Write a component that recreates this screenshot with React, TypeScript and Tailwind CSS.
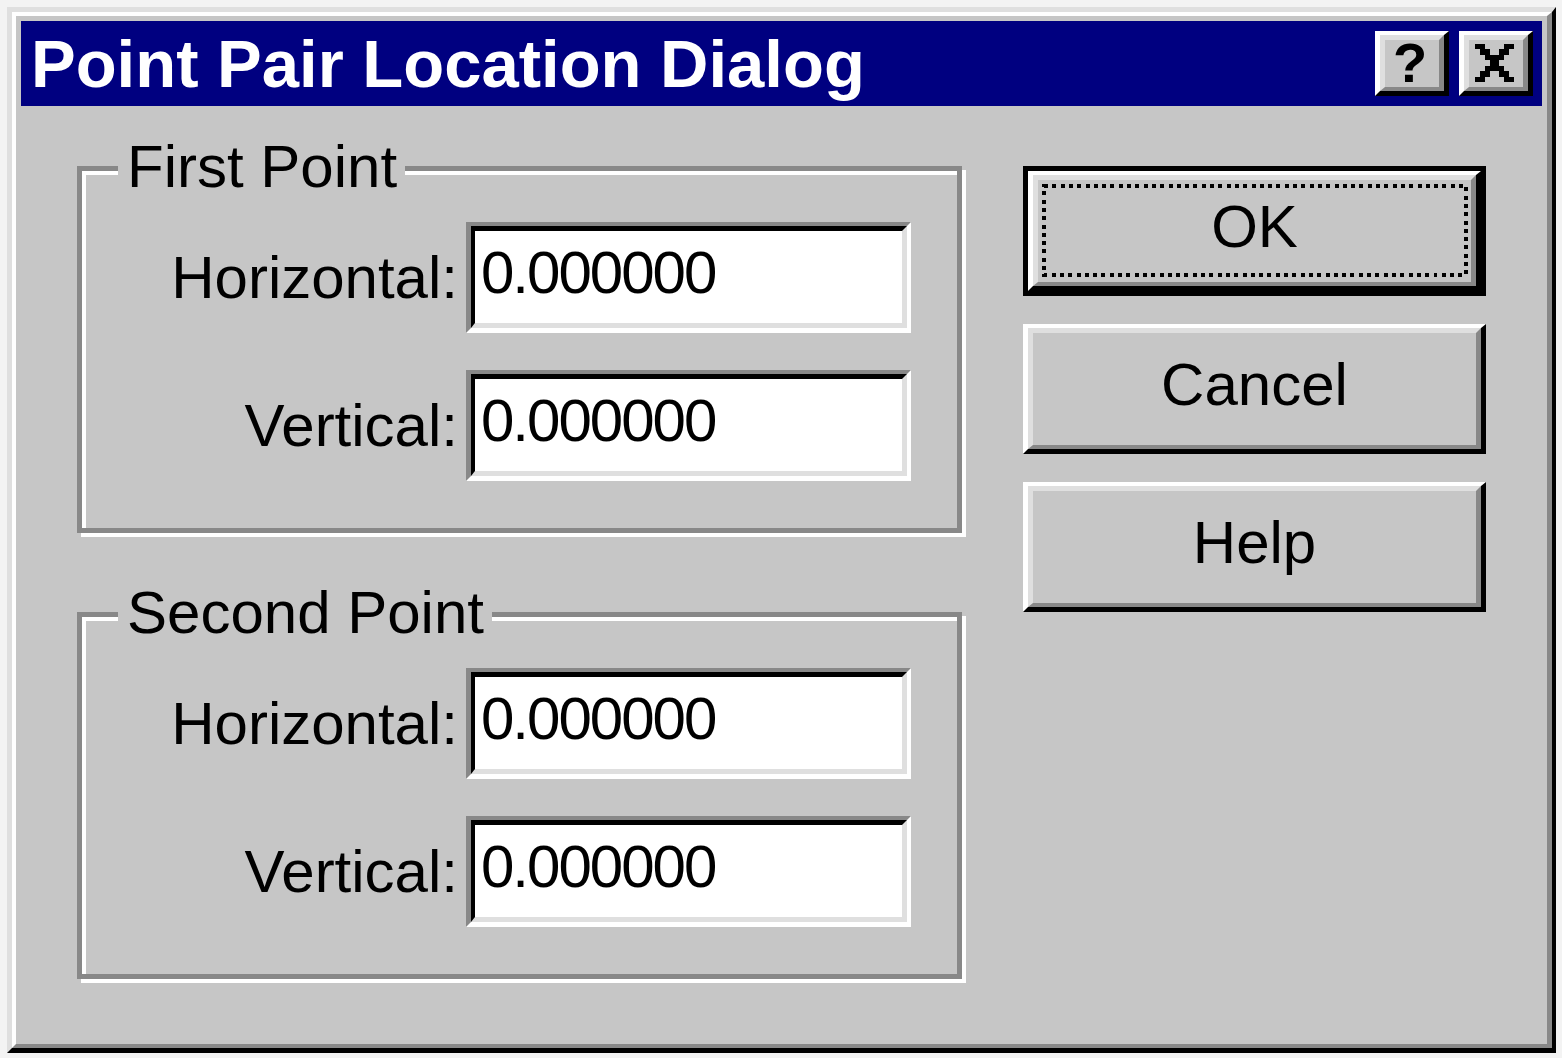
import React from "react";

const face = "bg-[#c6c6c6]";
const font = "font-['Liberation_Sans',Arial,sans-serif]";

// classic raised bevel: white / light / gray / black
function Bevel({ className = "", children }: { className?: string; children?: React.ReactNode }) {
  return (
    <div className={`border-t-4 border-l-[5px] border-r-[5px] border-b-[5px] border-t-white border-l-white border-r-black border-b-black ${className}`}>
      <div className={`h-full w-full border-[5px] border-b-4 border-t-[#dfdfdf] border-l-[#dfdfdf] border-r-[#888888] border-b-[#888888] ${face}`}>
        {children}
      </div>
    </div>
  );
}

function Field({ value }: { value: string }) {
  return (
    <div className="w-[445px] h-[111px] border-t-4 border-l-[5px] border-t-[#888888] border-l-[#888888] border-r-4 border-b-[5px] border-r-white border-b-white">
      <div className="h-full w-full border-t-[5px] border-l-4 border-t-black border-l-black border-r-[5px] border-b-[5px] border-r-[#dfdfdf] border-b-[#dfdfdf] bg-white flex items-center pl-[6px] pb-[8px]">
        <span className="text-[60px] leading-none text-black tracking-[-2px]">{value}</span>
      </div>
    </div>
  );
}

function Row({ label, value }: { label: string; value: string }) {
  return (
    <div className="flex items-center">
      <div className="w-[378px] text-right text-[60px] leading-none text-black pr-[2px]">{label}</div>
      <div className="ml-[6px]">
        <Field value={value} />
      </div>
    </div>
  );
}

function Group({ title }: { title: string }) {
  return (
    <div className="relative w-[885px] h-[367px] border-[5px] border-[#888888] shadow-[inset_4px_4px_0_#ffffff,4px_4px_0_#ffffff]">
      <div className={`absolute left-[36px] top-[-34px] ${face} pl-[9px] pr-[8px] text-[60px] leading-none text-black`}>
        {title}
      </div>
      <div className="flex flex-col gap-[37px] pt-[51px]">
        <Row label="Horizontal:" value="0.000000" />
        <Row label="Vertical:" value="0.000000" />
      </div>
    </div>
  );
}

function CloseGlyph() {
  const cells = [
    [0, 0], [1, 0], [6, 0], [7, 0],
    [1, 1], [2, 1], [5, 1], [6, 1],
    [2, 2], [3, 2], [4, 2], [5, 2],
    [3, 3], [4, 3],
    [2, 4], [3, 4], [4, 4], [5, 4],
    [1, 5], [2, 5], [5, 5], [6, 5],
    [0, 6], [1, 6], [6, 6], [7, 6],
  ];
  return (
    <svg width="39" height="38" viewBox="0 0 8 7" preserveAspectRatio="none" shapeRendering="crispEdges">
      {cells.map(([x, y]) => (
        <rect key={`${x}-${y}`} x={x} y={y} width="1" height="1" fill="#000" />
      ))}
    </svg>
  );
}

export default function App() {
  return (
    <div className={`min-h-screen w-full bg-[#f3f3f3] pt-[7px] pl-[7px] ${font}`}>
      {/* window frame */}
      <div className="w-[1549px] h-[1046px] border-t-[5px] border-l-[5px] border-t-[#dfdfdf] border-l-[#dfdfdf] border-r-4 border-b-[5px] border-r-black border-b-black">
        <div className={`h-full w-full border-t-4 border-l-4 border-t-white border-l-white border-r-[5px] border-b-4 border-r-[#888888] border-b-[#888888] ${face} p-[5px]`}>
          {/* title bar */}
          <div className="h-[85px] bg-[#000080] flex items-center pl-[10px] pr-[9px]">
            <div className="flex-1 text-white font-bold text-[67px] leading-none">Point Pair Location Dialog</div>
            <div className="flex gap-[10px]">
              <Bevel className="w-[74px] h-[65px]">
                <div className="h-full w-full flex items-center justify-center text-black font-bold text-[56px] leading-none pb-[2px] pr-[4px]">?</div>
              </Bevel>
              <Bevel className="w-[74px] h-[65px]">
                <div className="h-full w-full flex items-center justify-center pr-[4px] pb-[1px]">
                  <CloseGlyph />
                </div>
              </Bevel>
            </div>
          </div>

          {/* body */}
          <div className="flex pl-[56px] pt-[60px]">
            <div className="flex flex-col gap-[79px]">
              <Group title="First Point" />
              <Group title="Second Point" />
            </div>
            <div className="ml-[61px] flex flex-col gap-[28px] w-[463px]">
              <div className="relative border-[5px] border-black h-[130px]">
                <Bevel className="h-full w-full">
                  <div className="h-full w-full flex items-center justify-center text-[60px] leading-none text-black pb-[8px]">OK</div>
                </Bevel>
                <svg className="absolute left-[14px] top-[13px]" width="426" height="93" shapeRendering="crispEdges">
                  <rect x="2" y="2" width="422" height="89" fill="none" stroke="#000" strokeWidth="4" strokeDasharray="4 4.3" />
                </svg>
              </div>
              <Bevel className="h-[130px]">
                <div className="h-full w-full flex items-center justify-center text-[60px] leading-none text-black pb-[8px]">Cancel</div>
              </Bevel>
              <Bevel className="h-[130px]">
                <div className="h-full w-full flex items-center justify-center text-[60px] leading-none text-black pb-[8px]">Help</div>
              </Bevel>
            </div>
          </div>
        </div>
      </div>
    </div>
  );
}
